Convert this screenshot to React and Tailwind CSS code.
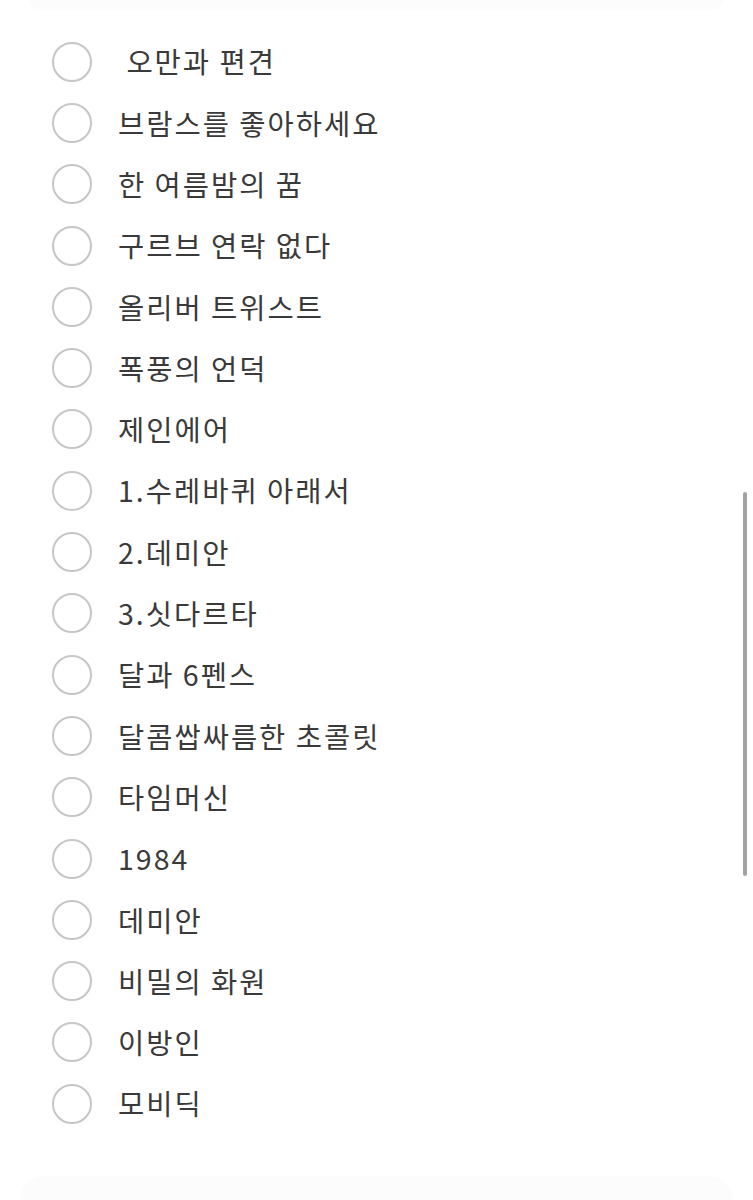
import React from 'react';

const books = [
  ' 오만과 편견',
  '브람스를 좋아하세요',
  '한 여름밤의 꿈',
  '구르브 연락 없다',
  '올리버 트위스트',
  '폭풍의 언덕',
  '제인에어',
  '1.수레바퀴 아래서',
  '2.데미안',
  '3.싯다르타',
  '달과 6펜스',
  '달콤쌉싸름한 초콜릿',
  '타임머신',
  '1984',
  '데미안',
  '비밀의 화원',
  '이방인',
  '모비딕',
];

const App = () => {
  return (
    <div className="relative w-[753px] h-[1200px] bg-white overflow-hidden font-['Noto_Sans_CJK_KR','Noto_Sans',sans-serif]">
      <div className="h-[10px] mx-[30px] bg-[#fcfcfc] rounded-b-[20px]" />
      <ul className="pt-[21px] pl-[52px]">
        {books.map((b, i) => (
          <li key={i} className="flex items-center h-[61.3px]">
            <span className="w-[40px] h-[40px] rounded-full border-[2.5px] border-[#c6c6c6] shrink-0" />
            <span className="ml-[26px] text-[28.5px] leading-none text-[#3a3a3a] whitespace-pre tracking-[2px]">{b}</span>
          </li>
        ))}
      </ul>
      {/* scrollbar */}
      <div className="absolute left-[743px] top-[492px] w-[4px] h-[384px] rounded-full bg-[#a3a3a3]" />
      <div className="absolute left-[20px] right-[20px] top-[1176px] bottom-0 bg-[#fcfcfc] rounded-t-[24px]" />
    </div>
  );
};

export default App;
